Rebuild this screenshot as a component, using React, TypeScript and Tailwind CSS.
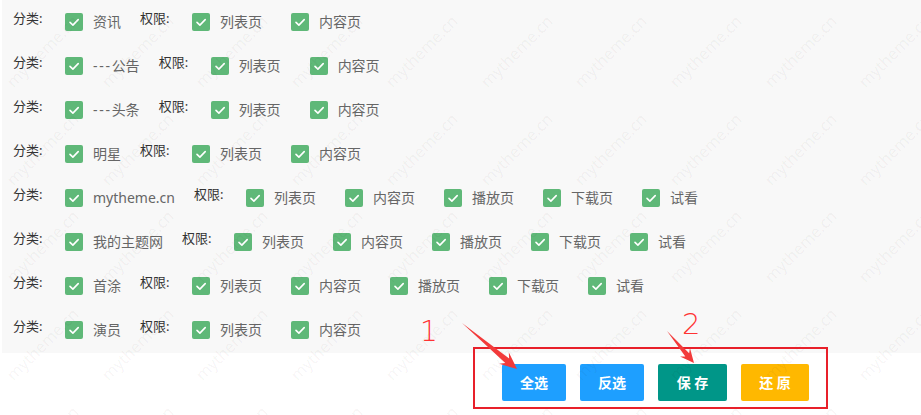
import React from 'react';

type Row = { name: string; perms: string[] };

const basic = ['列表页', '内容页'];
const full = ['列表页', '内容页', '播放页', '下载页', '试看'];

const rows: Row[] = [
  { name: '资讯', perms: basic },
  { name: '---公告', perms: basic },
  { name: '---头条', perms: basic },
  { name: '明星', perms: basic },
  { name: 'mytheme.cn', perms: full },
  { name: '我的主题网', perms: full },
  { name: '首涂', perms: full },
  { name: '演员', perms: basic },
];

function Checkbox() {
  return (
    <span className="flex h-[18px] w-[18px] shrink-0 items-center justify-center rounded-[2px] bg-[#5FB878]">
      <svg width="18" height="18" viewBox="0 0 18 18" fill="none">
        <path d="M5 9.3 L7.9 12.1 L13.2 6.6" stroke="#fff" strokeWidth="1.6" strokeLinecap="round" strokeLinejoin="round" />
      </svg>
    </span>
  );
}

function Item({ text, last }: { text: string; last?: boolean }) {
  return (
    <div className={`flex h-[18px] items-center gap-[10px] ${last ? '' : 'mr-[29px]'}`}>
      <Checkbox />
      <span className="text-[14px] leading-[18px] text-[#666] whitespace-nowrap">{text}</span>
    </div>
  );
}

function CategoryName({ name }: { name: string }) {
  // the sub-category dashes are wider in the original font
  if (name.startsWith('---')) {
    return (
      <span className="text-[14px] leading-[18px] text-[#666] whitespace-nowrap">
        <span className="tracking-[1.7px]">---</span>
        {name.slice(3)}
      </span>
    );
  }
  return <span className="text-[14px] leading-[18px] text-[#666] whitespace-nowrap">{name}</span>;
}

// tapered arrow polygon in page coords
function arrow(x1: number, y1: number, x2: number, y2: number, head: number, headW: number, shaftW: number) {
  const dx = x2 - x1;
  const dy = y2 - y1;
  const len = Math.hypot(dx, dy);
  const ux = dx / len;
  const uy = dy / len;
  const nx = -uy;
  const ny = ux;
  const bx = x1 + ux * (len - head);
  const by = y1 + uy * (len - head);
  const sx = x1 + ux * (len - head * 0.75);
  const sy = y1 + uy * (len - head * 0.75);
  const pts = [
    [x1, y1],
    [sx + nx * shaftW / 2, sy + ny * shaftW / 2],
    [bx + nx * headW / 2, by + ny * headW / 2],
    [x2, y2],
    [bx - nx * headW / 2, by - ny * headW / 2],
    [sx - nx * shaftW / 2, sy - ny * shaftW / 2],
  ];
  return pts.map((p) => p.join(',')).join(' ');
}

function Watermark() {
  const marks: { x: number; y: number }[] = [];
  for (let i = -2; i < 11; i++) {
    for (let j = -1; j < 6; j++) {
      marks.push({ x: 15 + i * 94.7, y: 90 + j * 97.7 });
    }
  }
  return (
    <div className="pointer-events-none absolute inset-0 overflow-hidden">
      {marks.map((m, k) => (
        <span
          key={k}
          className="absolute origin-bottom-left -rotate-45 text-[16px] leading-[16px] text-black/[0.05] whitespace-nowrap"
          style={{ left: m.x, top: m.y - 16 }}
        >
          mytheme.cn
        </span>
      ))}
    </div>
  );
}

export default function App() {
  return (
    <div
      className="relative h-[415px] w-[921px] overflow-hidden bg-white"
      style={{ fontFamily: '"Noto Sans", "Noto Sans CJK SC", sans-serif' }}
    >
      {/* permission list */}
      <div className="ml-[2px] h-[353px] bg-[#f8f8f8]">
        {rows.map((row) => (
          <div key={row.name} className="flex h-[44px] items-start pl-[11px] pt-[13px]">
            <span className="-mt-px w-[52px] text-[13px] leading-[13px] text-[#333]">分类:</span>
            <div className="mr-[19px] flex h-[18px] items-center gap-[10px]">
              <Checkbox />
              <CategoryName name={row.name} />
            </div>
            <span className="-mt-px w-[52px] text-[13px] leading-[13px] text-[#333]">权限:</span>
            {row.perms.map((p, i) => (
              <Item key={p} text={p} last={i === row.perms.length - 1} />
            ))}
          </div>
        ))}
      </div>

      {/* action buttons */}
      <div className="flex gap-[14px] pl-[502px] pt-[11px]">
        <button className="h-[37px] w-[64px] rounded-[2px] bg-[#1E9FFF] text-[14px] font-bold text-white">全选</button>
        <button className="h-[37px] w-[64px] rounded-[2px] bg-[#1E9FFF] text-[14px] font-bold text-white">反选</button>
        <button className="h-[37px] w-[69px] rounded-[2px] bg-[#009688] text-[14px] font-bold text-white">保 存</button>
        <button className="h-[37px] w-[68px] rounded-[2px] bg-[#FFB800] text-[14px] font-bold text-white">还 原</button>
      </div>

      <Watermark />

      {/* annotations */}
      <div className="pointer-events-none absolute left-[473px] top-[347px] h-[62px] w-[355px] border-2 border-[#E8202A]" />
      <span className="absolute left-[420px] top-[316px] text-[28px] font-extralight leading-[32px] text-[#FF3333]" style={{ fontFamily: '"DejaVu Sans", sans-serif' }}>1</span>
      <span className="absolute left-[682px] top-[308px] text-[29px] font-extralight leading-[32px] text-[#FF3333]" style={{ fontFamily: '"DejaVu Sans", sans-serif' }}>2</span>
      <svg className="pointer-events-none absolute inset-0" width="921" height="415">
        <polygon points={arrow(462, 323, 517, 369, 17, 15, 6)} fill="#F23A3A" />
        <polygon points={arrow(667, 331, 694, 363, 14, 13, 5)} fill="#F23A3A" />
      </svg>
    </div>
  );
}
